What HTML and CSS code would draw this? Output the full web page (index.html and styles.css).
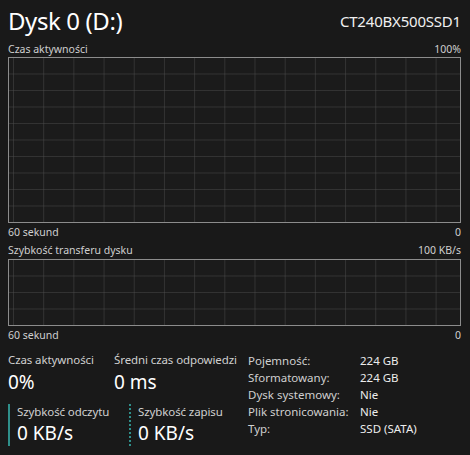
FILE: index.html
```html
<!DOCTYPE html>
<html lang="pl">
<head>
<meta charset="utf-8">
<link rel="stylesheet" href="styles.css">
</head>
<body>
<div class="page">
  <div class="header">
    <div class="title">Dysk 0 (D:)</div>
    <div class="model">CT240BX500SSD1</div>
  </div>
  <div class="axis top"><span>Czas aktywności</span><span>100%</span></div>
  <div class="chart big"></div>
  <div class="axis"><span>60 sekund</span><span>0</span></div>
  <div class="axis second"><span>Szybkość transferu dysku</span><span>100 KB/s</span></div>
  <div class="chart small"></div>
  <div class="axis"><span>60 sekund</span><span>0</span></div>
  <div class="stats">
    <div class="left">
      <div class="row">
        <div class="stat w1"><div class="slabel">Czas aktywności</div><div class="svalue">0%</div></div>
        <div class="stat"><div class="slabel">Średni czas odpowiedzi</div><div class="svalue">0 ms</div></div>
      </div>
      <div class="row rw">
        <div class="stat w2 read"><div class="slabel">Szybkość odczytu</div><div class="svalue">0 KB/s</div></div>
        <div class="stat write"><div class="slabel">Szybkość zapisu</div><div class="svalue">0 KB/s</div></div>
      </div>
    </div>
    <div class="info">
      <div class="k">Pojemność:</div><div class="v">224 GB</div>
      <div class="k">Sformatowany:</div><div class="v">224 GB</div>
      <div class="k">Dysk systemowy:</div><div class="v">Nie</div>
      <div class="k">Plik stronicowania:</div><div class="v">Nie</div>
      <div class="k">Typ:</div><div class="v">SSD (SATA)</div>
    </div>
  </div>
</div>
</body>
</html>
```
FILE: styles.css
```css
html, body {
  margin: 0;
  padding: 0;
  background: #191919;
}
body {
  width: 470px;
  height: 455px;
  overflow: hidden;
  font-family: "Noto Sans", "Open Sans", sans-serif;
  color: #d6d6d6;
}
.page {
  padding: 0 9px 0 8px;
  display: flex;
  flex-direction: column;
}
.header {
  display: flex;
  justify-content: space-between;
  align-items: flex-end;
  height: 36px;
}
.title {
  font-size: 24px;
  line-height: 30px;
  color: #ffffff;
  letter-spacing: -0.4px;
}
.model {
  font-size: 15px;
  line-height: 20px;
  color: #f0f0f0;
  padding-bottom: 5px;
  letter-spacing: -0.2px;
}
.axis {
  display: flex;
  justify-content: space-between;
  font-size: 10.5px;
  line-height: 14px;
  height: 17px;
  align-items: center;
  color: #cfcfcf;
}
.axis.top {
  height: 20px;
  align-items: flex-end;
  padding-bottom: 1px;
}
.axis.second {
  height: 19px;
}
.chart {
  border: 1px solid #8c8c8c;
  box-sizing: border-box;
  background-color: #1b1b1b;
  background-image:
    linear-gradient(to right, rgba(80,80,80,0.45) 1px, transparent 1px),
    linear-gradient(to bottom, rgba(80,80,80,0.45) 1px, transparent 1px);
  background-size: 30.2px 100%, 100% 16.5px;
  background-position: 4px 0, 0 -1px;
}
.chart.big {
  height: 166px;
}
.chart.small {
  height: 67px;
}
.stats {
  display: flex;
  padding-top: 8px;
}
.left {
  width: 240px;
  display: flex;
  flex-direction: column;
}
.row {
  display: flex;
}
.stat.w1 {
  width: 106px;
}
.stat.w2 {
  width: 121px;
  box-sizing: border-box;
}
.slabel {
  font-size: 11.5px;
  line-height: 18px;
  color: #d0d0d0;
  letter-spacing: -0.1px;
}
.svalue {
  font-size: 19px;
  line-height: 26px;
  color: #ffffff;
}
.rw {
  margin-top: 9px;
}
.read, .write {
  padding-left: 7px;
  height: 42px;
}
.read {
  border-left: 2px solid #2f8f8a;
}
.write {
  border-left: 2px dotted #2f8f8a;
}
.rw .slabel {
  line-height: 16px;
}
.info {
  display: grid;
  grid-template-columns: 112px auto;
  grid-auto-rows: 17px;
  align-content: start;
  font-size: 11.5px;
  line-height: 17px;
  padding-top: 1px;
  color: #d0d0d0;
}
.info .v {
  color: #ececec;
}
```
